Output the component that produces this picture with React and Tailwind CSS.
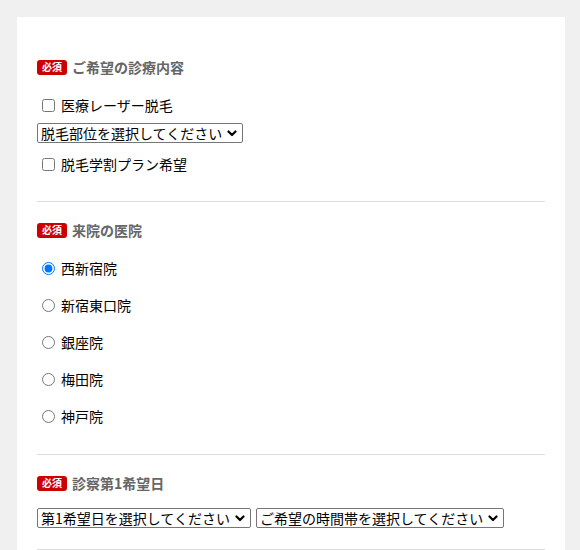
import React from 'react';

const Badge = () => (
  <span className="inline-flex items-center justify-center w-[30px] h-[15px] rounded-[3px] bg-[#cc0000] text-white text-[10px] font-bold leading-none">
    必須
  </span>
);

const Heading = ({ children }) => (
  <div className="flex items-center h-[16px] gap-[5px]">
    <Badge />
    <span className="text-[14px] font-bold text-[#666666] leading-none">{children}</span>
  </div>
);

const Select = ({ label }) => (
  <div className="relative flex w-fit">
    <select className="block appearance-none h-[20px] border border-[#767676] rounded-[2px] pl-[3px] pr-[19px] text-[14px] leading-[18px] text-black bg-white">
      <option>{label}</option>
    </select>
    <svg className="absolute right-[6px] top-[7px] pointer-events-none" width="10" height="7" viewBox="0 0 10 7">
      <path d="M1.5 1.5 L5 5 L8.5 1.5" fill="none" stroke="#000" strokeWidth="2.2" strokeLinecap="round" strokeLinejoin="round" />
    </svg>
  </div>
);

const Check = ({ label }) => (
  <label className="flex items-center h-[20px] text-[14px] text-black">
    <input type="checkbox" className="m-0 ml-[5px] mr-[6px] w-[13px] h-[13px]" />
    {label}
  </label>
);

const clinics = ['西新宿院', '新宿東口院', '銀座院', '梅田院', '神戸院'];

export default function App() {
  return (
    <div
      className="min-h-screen bg-[#f0f0f0] pt-[17px] pl-[17px] pr-[15px]"
      style={{ fontFamily: '"Noto Sans CJK JP", "Noto Sans", sans-serif' }}
    >
      <div className="bg-white px-[20px] pt-[21px] h-[540px] overflow-hidden">
        {/* 診療内容 */}
        <section className="pt-[21px] pb-[27px] border-b border-[#dddddd]">
          <Heading>ご希望の診療内容</Heading>
          <div className="mt-[20px]">
            <Check label="医療レーザー脱毛" />
          </div>
          <div className="mt-[8px]">
            <Select label="脱毛部位を選択してください" />
          </div>
          <div className="mt-[11px]">
            <Check label="脱毛学割プラン希望" />
          </div>
        </section>

        {/* 来院の医院 */}
        <section className="pt-[20px] pb-[19px] border-b border-[#dddddd]">
          <Heading>来院の医院</Heading>
          <div className="mt-[12px]">
            {clinics.map((c, i) => (
              <label key={c} className="flex items-center h-[37px] text-[14px] text-black">
                <input
                  type="radio"
                  name="clinic"
                  defaultChecked={i === 0}
                  className="m-0 ml-[5px] mr-[6px] w-[13px] h-[13px]"
                />
                {c}
              </label>
            ))}
          </div>
        </section>

        {/* 第1希望日 */}
        <section className="pt-[20px] pb-[21px] border-b border-[#dddddd]">
          <Heading>診察第1希望日</Heading>
          <div className="mt-[17px] flex gap-[5px]">
            <Select label="第1希望日を選択してください" />
            <Select label="ご希望の時間帯を選択してください" />
          </div>
        </section>
      </div>
    </div>
  );
}
